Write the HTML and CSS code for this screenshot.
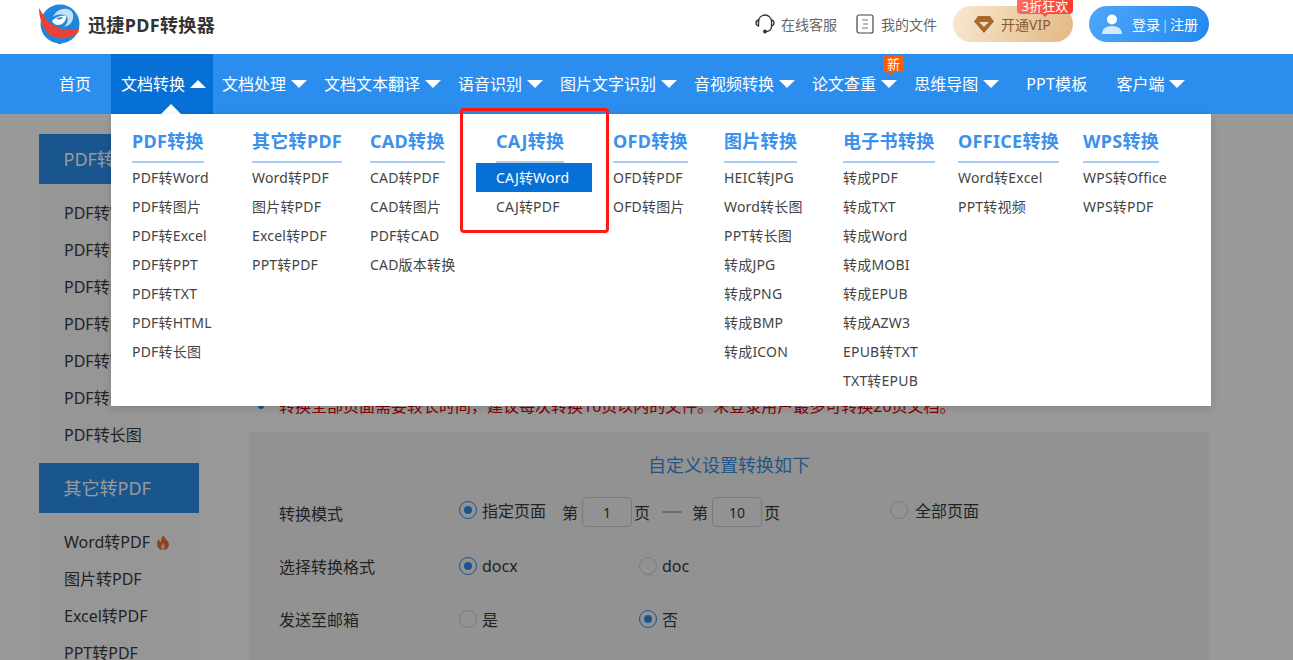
FILE: index.html
```html
<!DOCTYPE html>
<html lang="zh-CN">
<head>
<meta charset="utf-8">
<title>迅捷PDF转换器</title>
<link rel="stylesheet" href="styles.css">
</head>
<body>
<header class="top">
  <a class="brand">
    <svg class="logo" width="42" height="42" viewBox="0 0 42 42">
      <circle cx="22" cy="21" r="19.500" fill="#1f86dc"/>
      <path d="M16 35l4 6c2 0 3 0 4-1l2-7z" fill="#1f86dc"/>
      <path d="M15 14C18 6 27 4 32 7c5 3 4 11-1 15l-5 2c4-4 5-9 2-11-4-2-9-2-13 1z" fill="#bfe0f5"/>
      <path d="M14 18c4-5 11-6 14-5 1 4-3 9-8 9-3 0-5-2-6-4z" fill="#fff"/>
      <path d="M18 16c2-1.500 5-2 7-1.500-1 2-4 2.500-7 1.500z" fill="#1f86dc"/>
      <path d="M1 5C1 16 5 25 11 31c7 6 19 6 29-1l1-5c-9 3-19 2-26-3C9 18 5 12 1 5z" fill="#ea4335"/>
    </svg>
    <span class="brand-name">迅捷PDF转换器</span>
  </a>
  <div class="tools">
    <a class="tool tool-service">
      <svg width="22" height="22" viewBox="0 0 22 22" fill="none" stroke="#333" stroke-width="1.300">
        <path d="M4.500 10V8.500a6.500 6.500 0 0 1 13 0V14c0 2.500-2.500 4.500-5.500 4.500"/>
        <path d="M4.500 7C2.500 7.500 2 9 2 10s.5 2.500 2.500 3zM17.500 7c2 .5 2.500 2 2.500 3s-.5 2.500-2.500 3"/>
        <circle cx="11" cy="18.500" r="1.300" fill="#333"/>
      </svg>
      <span>在线客服</span>
    </a>
    <a class="tool tool-files">
      <svg width="18" height="20" viewBox="0 0 18 20" fill="none" stroke="#444" stroke-width="1.200">
        <rect x="1" y="1" width="16" height="18" rx="2"/>
        <path d="M6 6h6M7 10h5M6 14h6" stroke="#777"/>
      </svg>
      <span>我的文件</span>
    </a>
    <a class="vip">
      <svg width="20" height="17" viewBox="0 0 20 17">
        <path d="M4 0h12l4 5.500L10 17 0 5.500z" fill="#a8682c"/>
        <path d="M5 6h10l-5 5z" fill="#f3d9b4"/>
      </svg>
      <span>开通VIP</span>
      <em class="vip-tag">3折狂欢</em>
    </a>
    <a class="login">
      <svg width="22" height="20" viewBox="0 0 22 20">
        <circle cx="11" cy="5.500" r="5" fill="#fff"/>
        <path d="M1 20c0-5 4-8 10-8s10 3 10 8z" fill="#d4e9fd"/>
      </svg>
      <span>登录<i class="sep">|</i>注册</span>
    </a>
  </div>
</header>

<nav class="nav">
  <a class="nav-item home">首页</a>
  <a class="nav-item active">文档转换<i class="caret up"></i><i class="pointer"></i></a>
  <a class="nav-item">文档处理<i class="caret"></i></a>
  <a class="nav-item">文档文本翻译<i class="caret"></i></a>
  <a class="nav-item">语音识别<i class="caret"></i></a>
  <a class="nav-item">图片文字识别<i class="caret"></i></a>
  <a class="nav-item">音视频转换<i class="caret"></i></a>
  <a class="nav-item">论文查重<i class="caret"></i><em class="new-tag">新</em></a>
  <a class="nav-item">思维导图<i class="caret"></i></a>
  <a class="nav-item plain">PPT模板</a>
  <a class="nav-item client">客户端<i class="caret"></i></a>

  <div class="menu">
    <div class="menu-col">
      <h3>PDF转换</h3>
      <a>PDF转Word</a><a>PDF转图片</a><a>PDF转Excel</a><a>PDF转PPT</a><a>PDF转TXT</a><a>PDF转HTML</a><a>PDF转长图</a>
    </div>
    <div class="menu-col">
      <h3>其它转PDF</h3>
      <a>Word转PDF</a><a>图片转PDF</a><a>Excel转PDF</a><a>PPT转PDF</a>
    </div>
    <div class="menu-col">
      <h3>CAD转换</h3>
      <a>CAD转PDF</a><a>CAD转图片</a><a>PDF转CAD</a><a>CAD版本转换</a>
    </div>
    <div class="menu-col">
      <h3 class="muted-line">CAJ转换</h3>
      <a class="current">CAJ转Word</a><a>CAJ转PDF</a>
    </div>
    <div class="menu-col">
      <h3>OFD转换</h3>
      <a>OFD转PDF</a><a>OFD转图片</a>
    </div>
    <div class="menu-col">
      <h3>图片转换</h3>
      <a>HEIC转JPG</a><a>Word转长图</a><a>PPT转长图</a><a>转成JPG</a><a>转成PNG</a><a>转成BMP</a><a>转成ICON</a>
    </div>
    <div class="menu-col">
      <h3>电子书转换</h3>
      <a>转成PDF</a><a>转成TXT</a><a>转成Word</a><a>转成MOBI</a><a>转成EPUB</a><a>转成AZW3</a><a>EPUB转TXT</a><a>TXT转EPUB</a>
    </div>
    <div class="menu-col">
      <h3>OFFICE转换</h3>
      <a>Word转Excel</a><a>PPT转视频</a>
    </div>
    <div class="menu-col">
      <h3>WPS转换</h3>
      <a>WPS转Office</a><a>WPS转PDF</a>
    </div>
    <div class="red-box"></div>
  </div>
</nav>

<main class="main">
  <aside class="side">
    <h4>PDF转换</h4>
    <ul>
      <li>PDF转Word</li><li>PDF转图片</li><li>PDF转Excel</li><li>PDF转PPT</li><li>PDF转TXT</li><li>PDF转HTML</li><li>PDF转长图</li>
    </ul>
    <h4>其它转PDF</h4>
    <ul>
      <li>Word转PDF
        <svg class="flame" width="14" height="15" viewBox="0 0 14 15"><path d="M7 0c1 3 5 5 6 9 0 4-3 6-6 6s-6-2-6-6c0-2 1-4 2-5 0 2 1 3 2 3 0-3 1-5 2-7z" fill="#ef6f2e"/><path d="M7 8c1 1 2 2 2 4s-1 3-2 3-2-1-2-3 1-3 2-4z" fill="#f9c9a8"/></svg>
      </li>
      <li>图片转PDF</li><li>Excel转PDF</li><li>PPT转PDF</li>
    </ul>
  </aside>
  <section class="content">
    <ul class="notes">
      <li>转换全部页面需要较长时间，建议每次转换10页以内的文件。未登录用户最多可转换20页文档。</li>
    </ul>
    <div class="panel">
      <h2>自定义设置转换如下</h2>
      <div class="row row-mode">
        <span class="row-label">转换模式</span>
        <div class="opts">
          <span class="opt opt-range"><i class="radio on"></i>指定页面</span>
          <span class="range">第<b class="num">1</b>页<i class="dash"></i>第<b class="num">10</b>页</span>
          <span class="opt opt-all"><i class="radio"></i>全部页面</span>
        </div>
      </div>
      <div class="row row-format">
        <span class="row-label">选择转换格式</span>
        <div class="opts">
          <span class="opt opt-w180"><i class="radio on"></i>docx</span>
          <span class="opt"><i class="radio"></i>doc</span>
        </div>
      </div>
      <div class="row row-mail">
        <span class="row-label">发送至邮箱</span>
        <div class="opts">
          <span class="opt opt-w180"><i class="radio"></i>是</span>
          <span class="opt"><i class="radio on"></i>否</span>
        </div>
      </div>
    </div>
  </section>
</main>
</body>
</html>
```

FILE: styles.css
```css
* { box-sizing: border-box; }
html, body { margin: 0; height: 660px; overflow: hidden; background: #fff; }
body { font-family: "Noto Sans", "Noto Sans CJK SC", sans-serif; color: #333; }
a { color: inherit; text-decoration: none; }
i, em { font-style: normal; }
ul { list-style: none; margin: 0; padding: 0; }
h2, h3, h4 { margin: 0; }

.top { height: 54px; display: flex; align-items: center; justify-content: space-between; padding: 0 84px 6px 38px; }
.brand { display: flex; align-items: center; }
.brand-name { margin-left: 8px; font-size: 18px; font-weight: 700; color: #333; letter-spacing: .35px; }
.tools { display: flex; align-items: center; }
.tool { display: flex; align-items: center; gap: 5px; font-size: 14px; color: #666; }
.tool-files { margin-left: 19px; gap: 7px; }
.vip { position: relative; margin-left: 16px; width: 120px; height: 36px; padding-left: 21px; display: flex; align-items: center; gap: 7px; border-radius: 18px; background: linear-gradient(110deg, #f8e8d2, #e2b883); color: #8a5a2c; font-size: 14px; }
.vip-tag { position: absolute; right: 0; top: -6px; width: 56px; height: 14px; line-height: 12px; font-size: 13px; text-align: center; color: #fff; background: linear-gradient(90deg, #ff6a5e, #fb3a2e); border-radius: 0 0 4px 4px; }
.vip-tag::after { content: ""; position: absolute; left: 25px; top: 14px; border-left: 3px solid transparent; border-right: 3px solid transparent; border-top: 3px solid #fc5048; }
.login { margin-left: 16px; width: 120px; height: 36px; padding-left: 12px; display: flex; align-items: center; gap: 9px; border-radius: 18px; background: linear-gradient(110deg, #4fa6fa, #2488ee); color: #fff; font-size: 14px; }
.sep { margin: 0 1.500px; font-size: 13px; font-weight: 300; }

.nav { position: relative; z-index: 3; height: 60px; padding-left: 39px; display: flex; background: #2b8eef; color: #fff; font-size: 16px; }
.nav-item { position: relative; height: 60px; padding: 0 8px 0 9px; display: flex; align-items: center; line-height: 60px; white-space: nowrap; }
.nav-item.home { padding: 0 20px; }
.nav-item.active { padding: 0 7px 0 10px; background: #0770d6; }
.nav-item.plain { padding-left: 19px; padding-right: 20px; letter-spacing: .2px; }
.nav-item.client { padding-left: 9px; }
.caret { margin-left: 5px; width: 0; height: 0; border-left: 8px solid transparent; border-right: 8px solid transparent; border-top: 8px solid #fff; }
.caret.up { border-top: 0; border-bottom: 8px solid #fff; }
.pointer { position: absolute; left: 50px; bottom: 0; width: 0; height: 0; border-left: 10px solid transparent; border-right: 10px solid transparent; border-bottom: 10px solid #fff; }
.new-tag { position: absolute; left: 80px; top: 2px; width: 21px; height: 16px; line-height: 16px; text-align: center; font-size: 13px; background: #fc5b05; border-radius: 2px; }
.new-tag::after { content: ""; position: absolute; left: 5px; top: 16px; border-left: 3px solid transparent; border-right: 3px solid transparent; border-top: 4px solid #fc5b05; }

.menu { position: absolute; left: 111px; top: 60px; width: 1100px; height: 292px; padding: 12px 0 0 21px; display: grid; grid-template-columns: 120px 118px 126px 117px 111px 119px 115px 125px 1fr; background: #fff; color: #444; font-size: 14px; letter-spacing: .2px; box-shadow: 0 2px 8px rgba(0, 0, 0, .15); }
.menu-col { display: flex; flex-direction: column; align-items: flex-start; }
.menu-col h3 { height: 37px; padding-bottom: 5px; line-height: 30px; font-size: 18px; font-weight: 700; color: #3b90ec; letter-spacing: .3px; border-bottom: 2px solid #a6cdf8; white-space: nowrap; }
.menu-col h3.muted-line { border-bottom-color: #bcc9d8; }
.menu-col a { height: 29px; line-height: 29px; white-space: nowrap; }
.menu-col a.current { margin-left: -20px; width: 116px; padding-left: 20px; background: #0770d6; color: #fff; }
.red-box { position: absolute; left: 349px; top: -6px; width: 149px; height: 125px; border: 3px solid #fb1a12; border-radius: 4px; }

.main { position: relative; height: 546px; overflow: hidden; padding-left: 39px; display: flex; align-items: flex-start; color: #3a3a3a; font-size: 16px; }
.main::after { content: ""; position: absolute; inset: 0; background: rgba(0, 0, 0, .4); }
.side { width: 160px; margin-top: 20px; background: #fbfbfb; }
.side h4 { height: 50px; padding-left: 24.500px; line-height: 50px; font-size: 18px; font-weight: 400; color: #fff; background: #2b8eef; }
.side ul { padding: 11px 0 9px; }
.side li { height: 37px; padding-left: 25px; line-height: 37px; white-space: nowrap; display: flex; align-items: center; gap: 6px; }
.content { width: 960px; margin-left: 50px; }
.notes { margin-top: 280px; padding-left: 30px; color: #e00000; line-height: 24px; }
.notes li { position: relative; }
.notes li::before { content: ""; position: absolute; left: -21px; top: 9px; width: 6px; height: 6px; border-radius: 50%; background: #2b8eef; }
.panel { margin-top: 14px; height: 300px; padding: 18px 0 0 30px; background: #f4f4f4; }
.panel h2 { width: 900px; text-align: center; line-height: 30px; font-size: 18px; font-weight: 400; color: #3a8fe6; }
.row { display: flex; align-items: center; height: 30px; }
.row-mode { margin-top: 18px; }
.row-format { margin-top: 23px; }
.row-mail { margin-top: 23px; }
.row-label { width: 180px; padding-bottom: 1px; }
.opts { display: flex; align-items: center; }
.opt { display: flex; align-items: center; gap: 5px; }
.opt-w180 { width: 180px; }
.opt-range { width: 103px; margin-top: -6px; }
.opt-all { margin-left: 108px; margin-top: -6px; gap: 7px; }
.range { display: flex; align-items: center; width: 220px; margin-top: -3px; }
.num { width: 50px; height: 30px; margin: 0 2px 0 4px; line-height: 30px; text-align: center; font-size: 14px; font-weight: 400; border: 1px solid #ccc; border-radius: 4px; }
.dash { width: 20px; height: 2px; margin: 0 10px 0 12px; background: #bbb; }
.radio { position: relative; width: 18px; height: 18px; border: 1px solid #ccc; border-radius: 50%; }
.radio.on { border-color: #2b8eef; }
.radio.on::after { content: ""; position: absolute; left: 4px; top: 4px; width: 8px; height: 8px; border-radius: 50%; background: #2b8eef; }
.flame { flex: none; }
```
